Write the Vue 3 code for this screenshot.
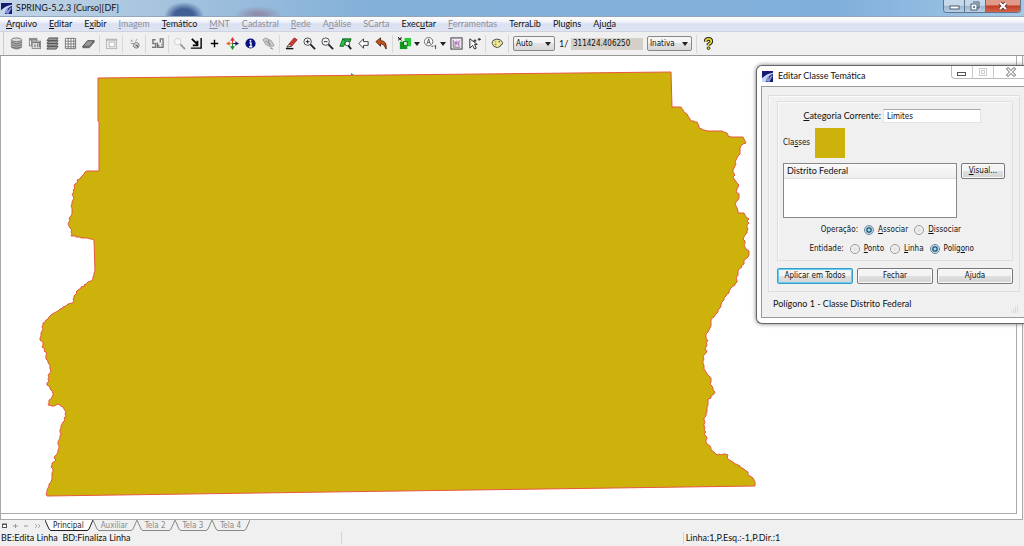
<script setup>
import { ref } from 'vue'

const menus = [
  { a: '', k: 'A', b: 'rquivo' },
  { a: '', k: 'E', b: 'ditar' },
  { a: 'E', k: 'x', b: 'ibir' },
  { a: '', k: 'I', b: 'magem', off: true },
  { a: '', k: 'T', b: 'emático' },
  { a: '', k: 'M', b: 'NT', off: true },
  { a: '', k: 'C', b: 'adastral', off: true },
  { a: '', k: 'R', b: 'ede', off: true },
  { a: 'A', k: 'n', b: 'álise', off: true },
  { a: 'SCarta', k: '', b: '', off: true },
  { a: 'Exec', k: 'u', b: 'tar' },
  { a: '', k: 'F', b: 'erramentas', off: true },
  { a: 'TerraLib', k: '', b: '' },
  { a: 'Plugins', k: '', b: '' },
  { a: 'Aju', k: 'd', b: 'a' },
]
const tabs = ['Principal', 'Auxiliar', 'Tela 2', 'Tela 3', 'Tela 4']
const activeTab = ref('Principal')
const scaleMode = ref('Auto')
const scale = ref('311424.406250')
const active = ref('Inativa')
const category = ref('Limites')
const operation = ref('a')
const entity = ref('g')

const east = [[671,72],[672,107],[681,107],[683,110],[688,116],[691,121],[697,122],[699,128],[703,130],[711,131],[722,131],[731,137],[743,137],[746,143],[741,146],[738,156],[735,162],[733,172],[737,183],[738,200],[736,206],[738,213],[744,213],[749,219],[747,233],[744,237],[746,249],[749,253],[744,262],[738,271],[737,280],[732,287],[727,294],[722,302],[718,312],[711,320],[708,332],[707,345],[703,361],[706,372],[711,380],[712,386],[715,392],[708,399],[708,405],[704,420],[704,430],[706,442],[711,450],[717,455],[725,454],[731,461],[742,468],[750,476],[754,480],[755,486]]
const west = [[47,496],[47,490],[51,482],[52,465],[57,454],[59,440],[61,428],[65,420],[66,412],[63,407],[58,404],[54,406],[48,405],[49,400],[53,395],[50,389],[47,385],[50,369],[46,355],[43,345],[40,338],[43,325],[51,315],[60,309],[67,305],[72,303],[78,290],[91,281],[95,271],[94,240],[88,238],[71,236],[69,222],[73,200],[73,190],[77,180],[87,171],[99,171]]

// Roughens a border line; long vertical stretches stay straight.
function jag(points, seed) {
  let s = seed
  const rnd = () => ((s = (s * 16807) % 2147483647) / 2147483647) - 0.5
  const out = []
  points.forEach(([x, y], i) => {
    out.push([x, y])
    const next = points[i + 1]
    if (!next) return
    const len = Math.hypot(next[0] - x, next[1] - y)
    const n = len > 30 && Math.abs(next[0] - x) < 2 ? 1 : Math.floor(len / 2)
    for (let k = 1; k < n; k++) {
      const t = k / n
      out.push([
        Math.round(x + (next[0] - x) * t + rnd() * 3),
        Math.round(y + (next[1] - y) * t + rnd()),
      ])
    }
  })
  return out
}
const outline = [[98, 78], ...jag(east, 7), ...jag(west, 31), [99, 122], [98, 121]]
  .map(p => p.join(','))
  .join(' ')
</script>

<template>
  <div class="app">
    <header class="titlebar">
      <svg class="logo" viewBox="0 0 12 12"><rect width="12" height="12" fill="#171a72"/><path d="M0 12V8Q5 3 12 2V3Q6 5 4 12Z" fill="#c9d5f4"/><path d="M4 11L6 6H8L7 9L10 5H12L8 12Z" fill="#8798d4"/></svg>
      <h1>SPRING-5.2.3 [Curso][DF]</h1>
      <div class="winbtns">
        <button aria-label="Minimizar"><svg viewBox="0 0 12 12"><rect x="2" y="6" width="9" height="3" fill="#fff" stroke="#4d5d70"/></svg></button>
        <button aria-label="Restaurar"><svg viewBox="0 0 12 12"><path d="M4 2H10V8H8" fill="none" stroke="#4d5d70"/><rect x="2" y="4" width="6" height="6" fill="#fff" stroke="#4d5d70"/><rect x="4" y="6" width="2" height="2" fill="#68809a"/></svg></button>
        <button class="close" aria-label="Fechar janela"><svg viewBox="0 0 12 12"><path d="M3 3L9 9M9 3L3 9" stroke="#6a3a38" stroke-width="4"/><path d="M3 3L9 9M9 3L3 9" stroke="#fff" stroke-width="2"/></svg></button>
      </div>
    </header>

    <nav class="menubar">
      <button v-for="m in menus" :key="m.a + m.k + m.b" :disabled="m.off">{{ m.a }}<u v-if="m.k">{{ m.k }}</u>{{ m.b }}</button>
    </nav>

    <div class="toolbar">
      <button class="tb" aria-label="Banco de dados"><svg viewBox="0 0 14 14"><path d="M1.500 3V11Q7 15 12.500 11V3Z" fill="#b4b4b4" stroke="#888"/><ellipse cx="7" cy="3" rx="5.500" ry="2" fill="#ddd" stroke="#777"/><path d="M2 6Q7 9 12 6M2 8.500Q7 11 12 8.500M2 11Q7 13 12 11" fill="none" stroke="#666"/></svg></button>
      <button class="tb" aria-label="Projeto"><svg viewBox="0 0 14 14"><rect x="1.500" y="1.500" width="8" height="8" fill="#eee" stroke="#888"/><path d="M1 3H10M4 2V10" stroke="#888" stroke-width="1.500"/><rect x="4.500" y="4.500" width="9" height="8" fill="#ddd" stroke="#888"/><path d="M7.500 8V11M10.500 7V11M12.500 6V11M5 6H13" stroke="#666"/></svg></button>
      <button class="tb" aria-label="Modelo de dados"><svg viewBox="0 0 14 14"><path d="M1 13L3 10H13L11 13ZM1 10L3 7H13L11 10ZM1 7L3 4H13L11 7ZM1 4L3 1H13L11 4Z" fill="#999" stroke="#555"/></svg></button>
      <button class="tb" aria-label="Grade"><svg viewBox="0 0 14 14"><path d="M1.500 1.500H12.500V12.500H1.500ZM4.500 1V13M7.500 1V13M10.500 1V13M1 4.500H13M1 7.500H13M1 10.500H13" fill="#fff" stroke="#777"/></svg></button>
      <button class="tb" aria-label="Plano de informação"><svg viewBox="0 0 14 14"><path d="M1 10L6 4H13L8 10Z" fill="#999" stroke="#444"/><path d="M1 10V11.500H8L13 5.500V4" fill="none" stroke="#444"/></svg></button>
      <i class="sep"></i>
      <button class="tb" disabled aria-label="Janela"><svg viewBox="0 0 14 14"><rect x="1.500" y="2.500" width="11" height="10" fill="#eee" stroke="#b5b5b5"/><rect x="4.500" y="5.500" width="6" height="5" fill="#fff" stroke="#b5b5b5"/><path d="M1 3H13" stroke="#b5b5b5" stroke-width="2"/></svg></button>
      <i class="sep"></i>
      <button class="tb" disabled aria-label="Mosaico"><svg viewBox="0 0 14 14"><path d="M3 3L5 5M5 3L3 5M10 2L8 5M3 7H7M5 10H7" stroke="#999"/><circle cx="9" cy="9" r="3" fill="#ddd" stroke="#777"/><path d="M8 9H10V11" fill="none" stroke="#444"/></svg></button>
      <i class="sep"></i>
      <button class="tb" aria-label="Contraste"><svg viewBox="0 0 14 14"><path d="M5 3H2V7H5V11H1M7 6V11H13V2H10V6" fill="none" stroke="#777" stroke-width="1.500"/><path d="M7 9H9M11 8H12" stroke="#555"/></svg></button>
      <i class="sep"></i>
      <button class="tb small" aria-label="Lupa"><svg viewBox="0 0 14 14"><circle cx="5" cy="5" r="3.500" fill="#f8f8f8" stroke="#ccc"/><path d="M8 8L13 13" stroke="#999" stroke-width="2"/></svg></button>
      <button class="tb" aria-label="Recompor"><svg viewBox="0 0 14 14"><path d="M2 2L8 8M8 4V9H3" fill="none" stroke="#000" stroke-width="2"/><path d="M12 1V12H1" fill="none" stroke="#000" stroke-width="1.500"/></svg></button>
      <button class="tb" aria-label="Cruz"><svg viewBox="0 0 14 14"><path d="M7 3V11M3 7H11" stroke="#000" stroke-width="1.500"/></svg></button>
      <button class="tb" aria-label="Mover"><svg viewBox="0 0 14 14"><path d="M7 3V7" stroke="#d33"/><path d="M7 0L9.500 4H4.500Z" fill="#d33"/><path d="M7 7V11" stroke="#168c26"/><path d="M7 14L4.500 10H9.500Z" fill="#168c26"/><path d="M7 7H3" stroke="#e48b2b"/><path d="M0 7L4 4.500V9.500Z" fill="#e46b2b"/><path d="M7 7H11" stroke="#111c62"/><path d="M14 7L10 4.500V9.500Z" fill="#111c62"/></svg></button>
      <button class="tb" aria-label="Informação"><svg viewBox="0 0 14 14"><circle cx="7" cy="7" r="5.500" fill="#07127f"/><path d="M6 6.500H7.500V10M5.500 10.500H9" fill="none" stroke="#fff" stroke-width="1.500"/><circle cx="7" cy="4" r="1" fill="#fff"/></svg></button>
      <button class="tb" disabled aria-label="Medidas"><svg viewBox="0 0 14 14"><path d="M1 3L4 1L10 4L13 9L10 11L4 8Z" fill="#ccc" stroke="#999"/><path d="M4 4L10 9M7 3L8 9M9 12L12 13" stroke="#888"/></svg></button>
      <i class="sep"></i>
      <button class="tb" aria-label="Edição"><svg viewBox="0 0 14 14"><path d="M4 8L10 1L13 3L7 10Z" fill="#d43a35" stroke="#94201e"/><path d="M4 8L2 11L7 10" fill="#eed" stroke="#333"/><path d="M1 12.500H9" stroke="#111" stroke-width="1.500"/></svg></button>
      <button class="tb" aria-label="Ampliar"><svg viewBox="0 0 14 14"><circle cx="5" cy="5" r="4" fill="#f5f5ff" stroke="#444"/><path d="M3 5H7M5 3V7" stroke="#222"/><path d="M8 8L13 13" stroke="#222" stroke-width="2"/></svg></button>
      <button class="tb" aria-label="Reduzir"><svg viewBox="0 0 14 14"><circle cx="5" cy="5" r="4" fill="#f5f5ff" stroke="#444"/><path d="M3 5H7" stroke="#222"/><path d="M8 8L13 13" stroke="#222" stroke-width="2"/></svg></button>
      <button class="tb" aria-label="Voo"><svg viewBox="0 0 14 14"><path d="M4 2H13L12 5H5Z" fill="#20b33e" stroke="#126424"/><path d="M4 2L1 10H5L7 5Z" fill="#20c93e" stroke="#126424"/><circle cx="9" cy="7" r="2.500" fill="#fff" stroke="#444"/><path d="M10 9L13 13" stroke="#222" stroke-width="2"/></svg></button>
      <button class="tb" aria-label="Anterior"><svg viewBox="0 0 14 14"><path d="M2 7L7 2V5H12V9H7V12Z" fill="#fff" stroke="#333"/></svg></button>
      <button class="tb" aria-label="Desfazer"><svg viewBox="0 0 14 14"><path d="M1 5L6 1V4Q13 4 12 13Q10 7 6 7V10Z" fill="#c8561a" stroke="#5c220d"/></svg></button>
      <i class="sep"></i>
      <button class="tb" aria-label="Camadas"><svg viewBox="0 0 14 14"><rect x="2" y="5" width="8" height="8" fill="#15951f"/><rect x="7" y="1" width="7" height="9" fill="#27ca37"/><rect x="6" y="5" width="4" height="4" fill="#dff4db" stroke="#116c19"/><path d="M0 0L4 4M4 0L0 4M0 2H4" stroke="#222"/></svg></button>
      <i class="caret"></i>
      <button class="tb" aria-label="Rótulo"><svg viewBox="0 0 14 14"><circle cx="5" cy="5" r="4.500" fill="#fff" stroke="#666"/><path d="M3 8L5 2L7 8M4 6H6" fill="none" stroke="#555"/><path d="M8 10H10M11 10L12.500 9V13" fill="none" stroke="#444"/></svg></button>
      <i class="caret"></i>
      <button class="tb" aria-label="Gráfico"><svg viewBox="0 0 14 14"><rect x="1" y="1" width="12" height="12" fill="#f4e8f6" stroke="#333"/><path d="M3.500 3V11H11" fill="none" stroke="#777"/><path d="M5.500 10V5L7.500 8V4M9.500 10V5L11 4" fill="none" stroke="#9b59a6"/></svg></button>
      <button class="tb" aria-label="Seleção"><svg viewBox="0 0 14 14"><path d="M2 2V12L5 9L7 13L9 12L7 8H10Z" fill="#fff" stroke="#222"/><path d="M6 4H9M7.500 2.500V5.500M10.500 2.500H14M12 1V4" stroke="#222"/></svg></button>
      <i class="sep"></i>
      <button class="tb" aria-label="Cores"><svg viewBox="0 0 14 14"><path d="M2 4Q5 1 10 3Q14 6 12 8Q10 8 10 10Q7 13 3 10Q0 7 2 4Z" fill="#f0ec9a" stroke="#444"/><circle cx="5" cy="5" r="1" fill="#7b9" /><circle cx="9" cy="5" r="1" fill="#a55"/><circle cx="5" cy="8" r="1" fill="#c80"/></svg></button>
      <i class="sep"></i>
      <span class="pick auto"><select v-model="scaleMode" aria-label="Modo de escala"><option>Auto</option></select></span>
      <label class="one" for="scale">1/</label>
      <input id="scale" v-model="scale" class="scale" readonly>
      <span class="pick inat"><select v-model="active" aria-label="Tela ativa"><option>Inativa</option></select></span>
      <i class="sep"></i>
      <button class="tb help" aria-label="Ajuda geral"><svg viewBox="0 0 14 14"><path d="M4 5Q4 2 7 2Q10 2 10 5Q10 6 7 8V9" fill="none" stroke="#222" stroke-width="4"/><path d="M4 5Q4 2 7 2Q10 2 10 5Q10 6 7 8V9" fill="none" stroke="#e6d52c" stroke-width="2"/><circle cx="7" cy="12" r="1.500" fill="#e6d52c" stroke="#222"/></svg></button>
    </div>

    <main class="stage">
      <div class="canvas">
        <svg class="map" viewBox="0 56 800 450" role="img" aria-label="Distrito Federal">
          <polygon :points="outline" fill="#ceb20c" stroke="#e5583f" stroke-width="1"/>
          <path d="M351 73L354 75H351Z" fill="#27a33a"/>
        </svg>
      </div>
    </main>

    <div class="tabs">
      <button class="mini" aria-label="Janela"><svg viewBox="0 0 8 8"><rect x="1.500" y="2.500" width="4" height="3" fill="#fff" stroke="#555"/><path d="M1 2H6" stroke="#555"/></svg></button>
      <button class="mini" aria-label="Adicionar"><svg viewBox="0 0 8 8"><path d="M1 4H6M3.500 2V6" stroke="#999"/></svg></button>
      <button class="mini" aria-label="Remover"><svg viewBox="0 0 8 8"><path d="M1 4H5" stroke="#999"/></svg></button>
      <button class="mini" aria-label="Mais"><svg viewBox="0 0 8 8"><path d="M1 2L3 4L1 6M4 2L6 4L4 6" fill="none" stroke="#aaa"/></svg></button>
      <button v-for="t in tabs" :key="t" class="tab" :class="{ on: t === activeTab }" @click="activeTab = t">
        <svg class="slant" viewBox="0 0 6 11"><path d="M0 0L4 9Q5 10.500 6 10.500V0Z" class="face"/><path d="M0 0L4 9Q5 10.500 6 10.500" class="edge"/></svg><span>{{ t }}</span><svg class="slant" viewBox="0 0 6 11"><path d="M6 0L2 9Q1 10.500 0 10.500V0Z" class="face"/><path d="M6 0L2 9Q1 10.500 0 10.500" class="edge"/></svg>
      </button>
    </div>

    <footer class="status">
      <span>BE:Edita Linha&nbsp; BD:Finaliza Linha</span><span></span><span>Linha:1,P.Esq.:-1,P.Dir.:1</span>
    </footer>

    <section class="dialog" role="dialog" aria-labelledby="dlg-title">
      <header class="dlg-head">
        <svg class="logo" viewBox="0 0 12 12"><rect width="12" height="12" fill="#171a72"/><path d="M0 12V8Q5 3 12 2V3Q6 5 4 12Z" fill="#c9d5f4"/><path d="M4 11L6 6H8L7 9L10 5H12L8 12Z" fill="#8798d4"/></svg>
        <h2 id="dlg-title">Editar Classe Temática</h2>
        <div class="dlg-btns">
          <button aria-label="Minimizar diálogo"><svg viewBox="0 0 12 12"><rect x="1.500" y="6.500" width="8" height="3" fill="#fff" stroke="#555"/></svg></button>
          <button disabled aria-label="Maximizar diálogo"><svg viewBox="0 0 12 12"><rect x="2.500" y="2.500" width="7" height="7" fill="none" stroke="#ccc"/><rect x="4.500" y="4.500" width="3" height="3" fill="none" stroke="#ccc"/></svg></button>
          <button class="dx" aria-label="Fechar diálogo"><svg viewBox="0 0 12 12"><path d="M3 3L9 9M9 3L3 9" stroke="#666" stroke-width="3" stroke-linecap="square"/><path d="M3 3L9 9M9 3L3 9" stroke="#fff" stroke-width="1.500" stroke-linecap="square"/></svg></button>
        </div>
      </header>
      <div class="client">
        <div class="outer">
          <div class="inner">
            <div class="row cat"><label for="cat"><u>C</u>ategoria Corrente:</label><input id="cat" v-model="category"></div>
            <div class="row cls"><span>Cla<u>s</u>ses</span><i class="swatch"></i></div>
            <div class="row lst">
              <ul class="list"><li>Distrito Federal</li></ul>
              <button class="btn visual"><u>V</u>isual...</button>
            </div>
            <div class="row rad op">
              <span>Operação:</span>
              <label><input v-model="operation" type="radio" name="op" value="a"><span><u>A</u>ssociar</span></label>
              <label><input v-model="operation" type="radio" name="op" value="d"><span><u>D</u>issociar</span></label>
            </div>
            <div class="row rad ent">
              <span>Entidade:</span>
              <label><input v-model="entity" type="radio" name="ent" value="p"><span><u>P</u>onto</span></label>
              <label><input v-model="entity" type="radio" name="ent" value="l"><span><u>L</u>inha</span></label>
              <label><input v-model="entity" type="radio" name="ent" value="g"><span>Políg<u>o</u>no</span></label>
            </div>
          </div>
          <div class="actions">
            <button class="btn main">Aplicar em Todos</button>
            <button class="btn">Fechar</button>
            <button class="btn">Ajuda</button>
          </div>
        </div>
        <p class="note"><span>Polígono 1 - Classe Distrito Federal</span>
          <svg class="grip" viewBox="0 0 8 8"><path d="M6 1H7M4 3H5M6 3H7M2 5H3M4 5H5M6 5H7M0 7H1M2 7H3M4 7H5M6 7H7" stroke="#c4c4c4"/></svg>
        </p>
      </div>
    </section>
  </div>
</template>

<style>
body { margin: 0; overflow: hidden; }
</style>

<style scoped>
* { box-sizing: border-box; }
.app {
  position: relative; min-height: 100vh; display: flex; flex-direction: column;
  background: #f0f0f0; color: #111; font: 9px/12px Lato, "Noto Sans", sans-serif; overflow: hidden;
}
button, input, select { font: inherit; color: inherit; margin: 0; padding: 0; border: 0; background: none; white-space: nowrap; }
h1, h2, p, ul { margin: 0; padding: 0; font: inherit; }
u { text-underline-offset: 1px; text-decoration-thickness: 1px; }
svg { display: block; flex: none; }
.logo { width: 11px; height: 11px; }

.titlebar {
  display: flex; align-items: center; height: 17px; padding-left: 1px; gap: 4px;
  background:
    radial-gradient(ellipse 20px 14px at 184px 16px, #203c7cbb 0 50%, transparent),
    radial-gradient(ellipse 24px 9px at 258px 15px, #8b7895aa 0 20%, transparent),
    linear-gradient(90deg, #c2d5e7, #a9c5df 14%, #83b0d8 36%, #80afdb 82%, #a5c8e6);
  border-bottom: 1px solid #93a8bf;
}
.winbtns { display: flex; align-self: flex-start; margin-left: auto; margin-right: 3px; height: 13px; border: 1px solid #60758c; border-top: 0; border-radius: 0 0 4px 4px; overflow: hidden; }
.winbtns button { width: 21px; display: grid; place-items: center; background: linear-gradient(#c5d8ea 45%, #9bb6d0 50%, #b9d0e6); border-right: 1px solid #60758c; }
.winbtns svg { width: 12px; height: 12px; }
.winbtns .close { width: 34px; border: 0; background: linear-gradient(#e19a89 40%, #c13d25 50%, #d3664c); }

.menubar { display: flex; gap: 12px; height: 15px; padding: 0 6px; background: linear-gradient(#fff, #f2f4fb 30%, #dce1f2 50%, #dfe4f4); border-bottom: 1px solid #d0d3de; }
.menubar button:disabled { color: #8c8e96; }

.toolbar { display: flex; align-items: center; height: 24px; padding-left: 7px; border-bottom: 1px solid #999; background: linear-gradient(90deg, transparent 3px, #ccc 3px 4px, transparent 4px) no-repeat, #f0f0f0; }
.tb { width: 18px; height: 18px; display: grid; place-items: center; flex: none; }
.tb svg { width: 13px; height: 13px; }
.tb.small { width: 16px; }
.sep { width: 5px; height: 18px; flex: none; background: linear-gradient(90deg, transparent 2px, #d8d8d8 2px 3px, transparent 3px); }
.caret { width: 8px; display: grid; place-items: center; flex: none; }
.caret::before, .pick::after { content: ""; border: 3px solid transparent; border-top: 4px solid #222; border-bottom: 0; }
.pick { display: flex; align-items: center; position: relative; height: 15px; border: 1px solid #888; border-radius: 2px; background: linear-gradient(#f5f5f5 50%, #e2e2e2 50%, #d8d8d8); font: 8px/12px "DejaVu Sans Condensed", "DejaVu Sans", sans-serif; }
.pick::after { position: absolute; right: 3px; pointer-events: none; }
.pick select { appearance: none; width: 100%; height: 100%; padding-left: 2px; }
.auto { width: 42px; margin-left: 2px; }
.one { width: 16px; padding-left: 4px; }
.scale { width: 72px; height: 12px; padding-left: 2px; background: #d4d0c8; font: 8px/12px "DejaVu Sans Condensed", "DejaVu Sans", sans-serif; }
.inat { width: 45px; margin: 0 2px 0 4px; }

.stage { flex: 1; display: flex; padding: 0 5px 5px 0; background: #fff; border: 1px solid #aaa; border-top: 0; margin-right: 1px; min-height: 0; }
.canvas { flex: 1; overflow: hidden; border: solid #aaa; border-width: 0 1px 1px 0; }
.map { width: 800px; height: 450px; margin-left: -1px; }

.tabs { display: flex; height: 12px; padding-left: 1px; font: 8px/11px "DejaVu Sans Condensed", "DejaVu Sans", sans-serif; color: #888; }
.mini { width: 11px; }
.mini svg { width: 8px; height: 8px; }
.tab { display: flex; height: 11px; }
.tab span { padding: 0 3px 0 2px; border-bottom: 1px solid #888; height: 11px; line-height: 11px; }
.slant { width: 6px; height: 11px; }
.face { fill: none; }
.edge { fill: none; stroke: #888; }
.tab.on { color: #222; }
.tab.on span { background: #fff; border-color: #222; }
.tab.on .face { fill: #fff; }
.tab.on .edge { stroke: #222; }

.status { display: grid; grid-template-columns: 1fr 1fr 1fr; height: 14px; }
.status span { padding-left: 2px; border-left: 1px solid #d5d5d5; height: 12px; }
.status span:first-child { border: 0; padding-left: 1px; }

.dialog {
  position: absolute; left: 756px; right: 0; top: 65px; display: flex; flex-direction: column;
  padding: 0 0 5px 4px; background: #fff; border: 1px solid #666; border-right: 0; border-radius: 6px 0 0 6px; box-shadow: 0 0 4px #777;
}
.dlg-head { display: flex; align-items: center; height: 20px; gap: 5px; padding-left: 1px; }
.dlg-btns { display: flex; align-self: flex-start; height: 13px; margin-left: auto; border: 1px solid #bbb; border-top: 0; border-right: 0; border-radius: 0 0 0 4px; }
.dlg-btns button { width: 21px; display: grid; place-items: center; border-right: 1px solid #ccc; }
.dlg-btns .dx { width: 30px; border: 0; padding-left: 4px; }
.dlg-btns svg { width: 12px; height: 12px; }
.client { background: #f0f0f0; border: 1px solid #999; border-right: 0; padding: 8px 4px 4px 6px; font: 8px/12px "DejaVu Sans Condensed", "DejaVu Sans", sans-serif; }
.outer { border: 1px solid #dedede; box-shadow: inset 1px 1px #fafafa; padding: 5px 6px 7px 8px; }
.inner { border: 1px solid #dedede; box-shadow: inset 1px 1px #fafafa; padding: 7px 7px 4px 5px; }
.row { display: flex; align-items: center; }
.cat { gap: 2px; justify-content: flex-end; padding-right: 24px; }
.cat label { font: 9px/12px Lato, "Noto Sans", sans-serif; }
.cat input { width: 98px; height: 14px; padding-left: 3px; background: #fff; border: 1px solid #e2e2e2; border-top-color: #aaa; }
.cls { gap: 5px; margin-top: 5px; }
.swatch { width: 30px; height: 30px; background: #ceb20c; }
.lst { margin-top: 5px; align-items: flex-start; gap: 4px; }
.list { flex: 1; height: 55px; list-style: none; background: #fff; border: 1px solid #888; }
.list li { padding-left: 3px; font: 9px/14px Lato, "Noto Sans", sans-serif; background: linear-gradient(#fafafa, #eee); border-bottom: 1px solid #ddd; }
.btn { flex: 1; height: 16px; border: 1px solid #777; border-radius: 2px; background: linear-gradient(#f4f4f4 50%, #e0e0e0 50%, #d3d3d3); box-shadow: inset 0 0 0 1px #fafafa; }
.visual { flex: none; width: 44px; }
.btn.main { border-color: #3c9cc4; box-shadow: inset 0 0 0 1px #5fd0f4; }
.rad { gap: 6px; height: 15px; }
.rad label { display: flex; align-items: center; gap: 4px; }
.rad input { appearance: none; width: 10px; height: 10px; border: 1px solid #999; border-radius: 50%; background: radial-gradient(#ddd, #fff); }
.rad input:checked { border-color: #688aa0; background: radial-gradient(circle, #9fe0f5 0 1px, #164a70 2px, #eef6fa 4px); }
.op { justify-content: flex-end; padding-right: 44px; margin-top: 4px; }
.ent { justify-content: flex-end; padding-right: 31px; margin-top: 4px; }
.actions { display: flex; gap: 4px; margin-top: 7px; }
.note { display: flex; align-items: flex-end; justify-content: space-between; margin-top: 6px; padding: 0 1px 0 5px; height: 15px; font: 9px/12px Lato, "Noto Sans", sans-serif; }
.note span { align-self: flex-start; }
.grip { width: 8px; height: 8px; }
</style>
